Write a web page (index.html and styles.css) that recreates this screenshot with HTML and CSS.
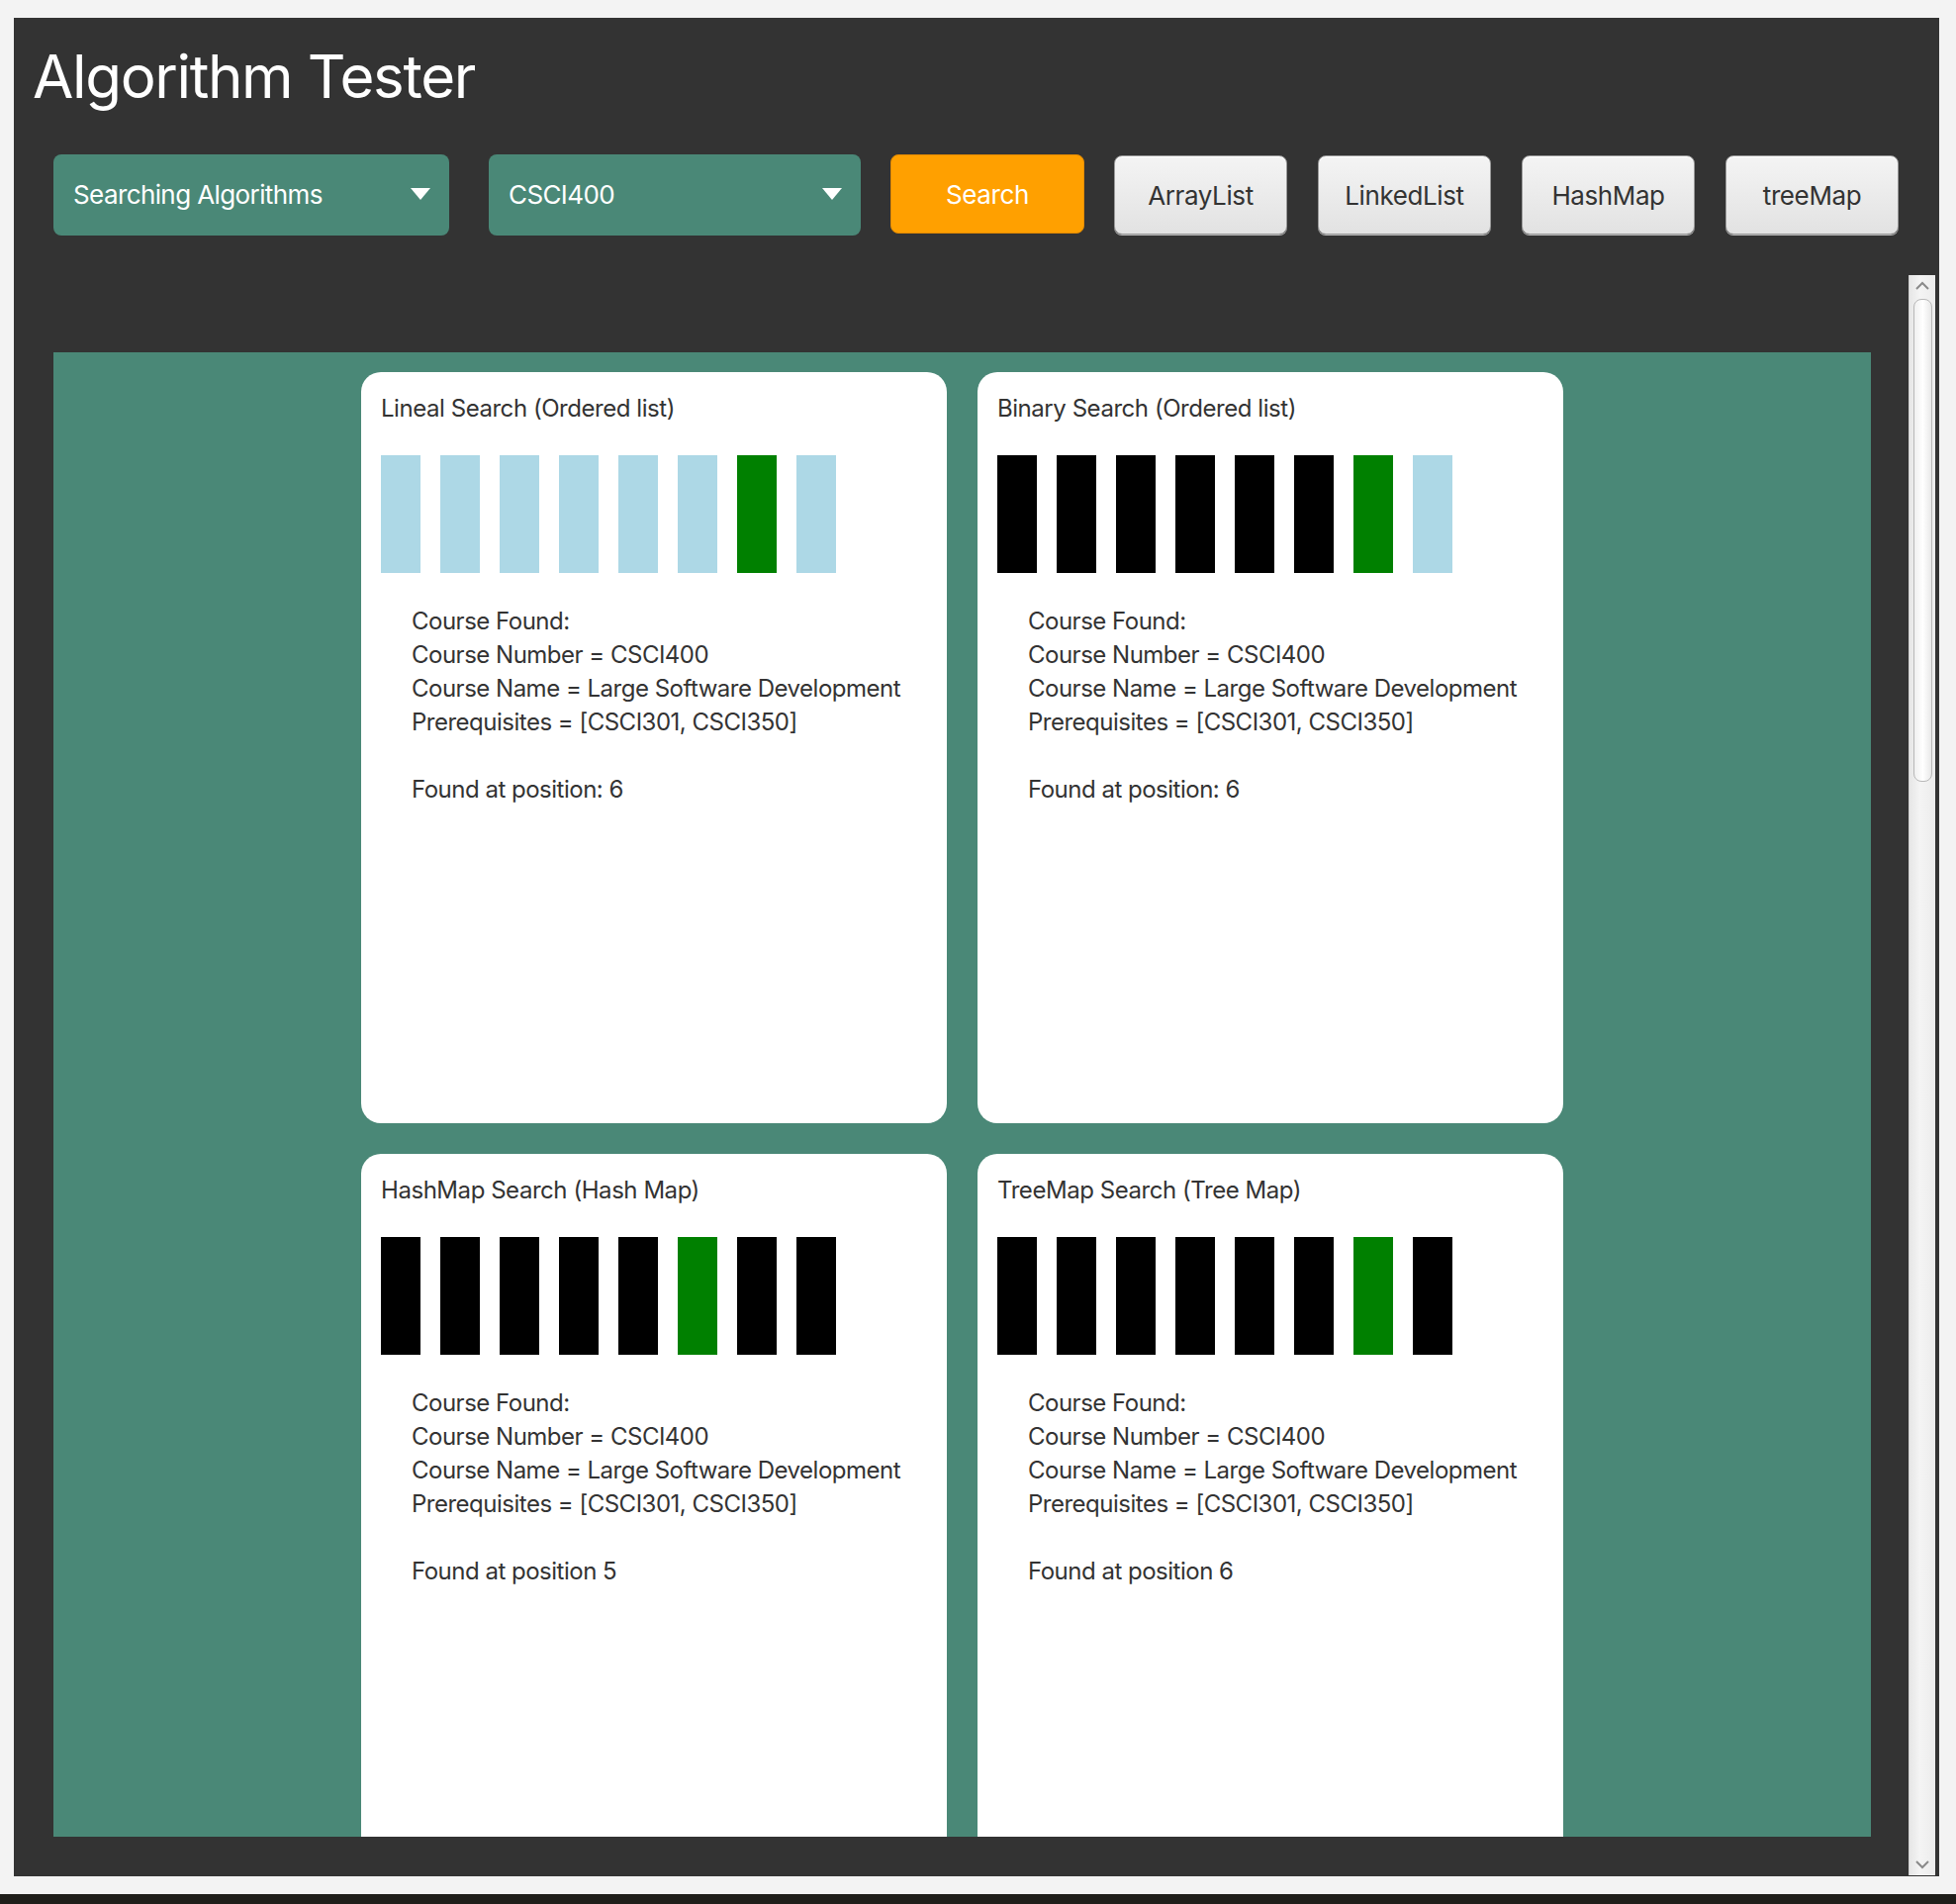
FILE: index.html
```html
<!DOCTYPE html>
<html lang="en">
<head>
<meta charset="utf-8">
<title>Algorithm Tester</title>
<link rel="stylesheet" href="styles.css">
</head>
<body>
<div class="window">
  <header class="app-header">
    <h1 class="app-title">Algorithm Tester</h1>
  </header>
  <div class="toolbar">
    <div class="select select-algo">
      <span class="select-label">Searching Algorithms</span>
      <svg class="select-arrow" viewBox="0 0 20 12" width="20" height="12"><path d="M0 0H20L10 12Z" fill="#fff"/></svg>
    </div>
    <div class="select select-course">
      <span class="select-label">CSCI400</span>
      <svg class="select-arrow" viewBox="0 0 20 12" width="20" height="12"><path d="M0 0H20L10 12Z" fill="#fff"/></svg>
    </div>
    <button class="btn btn-search">Search</button>
    <button class="btn btn-plain">ArrayList</button>
    <button class="btn btn-plain">LinkedList</button>
    <button class="btn btn-plain">HashMap</button>
    <button class="btn btn-plain">treeMap</button>
  </div>
  <div class="scroll-area">
    <div class="viewport">
      <div class="panel">
        <section class="card">
          <h2 class="card-title">Lineal Search (Ordered list)</h2>
          <div class="bars">
            <span class="bar bar-blue"></span><span class="bar bar-blue"></span><span class="bar bar-blue"></span><span class="bar bar-blue"></span><span class="bar bar-blue"></span><span class="bar bar-blue"></span><span class="bar bar-green"></span><span class="bar bar-blue"></span>
          </div>
          <div class="result">
            <p>Course Found:</p>
            <p>Course Number = CSCI400</p>
            <p>Course Name = Large Software Development</p>
            <p>Prerequisites = [CSCI301, CSCI350]</p>
            <p class="blank">&nbsp;</p>
            <p>Found at position: 6</p>
          </div>
        </section>
        <section class="card">
          <h2 class="card-title">Binary Search (Ordered list)</h2>
          <div class="bars">
            <span class="bar bar-black"></span><span class="bar bar-black"></span><span class="bar bar-black"></span><span class="bar bar-black"></span><span class="bar bar-black"></span><span class="bar bar-black"></span><span class="bar bar-green"></span><span class="bar bar-blue"></span>
          </div>
          <div class="result">
            <p>Course Found:</p>
            <p>Course Number = CSCI400</p>
            <p>Course Name = Large Software Development</p>
            <p>Prerequisites = [CSCI301, CSCI350]</p>
            <p class="blank">&nbsp;</p>
            <p>Found at position: 6</p>
          </div>
        </section>
        <section class="card">
          <h2 class="card-title">HashMap Search (Hash Map)</h2>
          <div class="bars">
            <span class="bar bar-black"></span><span class="bar bar-black"></span><span class="bar bar-black"></span><span class="bar bar-black"></span><span class="bar bar-black"></span><span class="bar bar-green"></span><span class="bar bar-black"></span><span class="bar bar-black"></span>
          </div>
          <div class="result">
            <p>Course Found:</p>
            <p>Course Number = CSCI400</p>
            <p>Course Name = Large Software Development</p>
            <p>Prerequisites = [CSCI301, CSCI350]</p>
            <p class="blank">&nbsp;</p>
            <p>Found at position 5</p>
          </div>
        </section>
        <section class="card">
          <h2 class="card-title">TreeMap Search (Tree Map)</h2>
          <div class="bars">
            <span class="bar bar-black"></span><span class="bar bar-black"></span><span class="bar bar-black"></span><span class="bar bar-black"></span><span class="bar bar-black"></span><span class="bar bar-black"></span><span class="bar bar-green"></span><span class="bar bar-black"></span>
          </div>
          <div class="result">
            <p>Course Found:</p>
            <p>Course Number = CSCI400</p>
            <p>Course Name = Large Software Development</p>
            <p>Prerequisites = [CSCI301, CSCI350]</p>
            <p class="blank">&nbsp;</p>
            <p>Found at position 6</p>
          </div>
        </section>
      </div>
    </div>
    <div class="scrollbar">
      <svg class="sb-arrow" viewBox="0 0 16 10" width="16" height="10"><path d="M2 8L8 2L14 8" fill="none" stroke="#8a8a8a" stroke-width="2"/></svg>
      <div class="sb-track">
        <div class="sb-thumb"></div>
      </div>
      <svg class="sb-arrow" viewBox="0 0 16 10" width="16" height="10"><path d="M2 2L8 8L14 2" fill="none" stroke="#8a8a8a" stroke-width="2"/></svg>
    </div>
  </div>
</div>
<div class="desk-strip"></div>
</body>
</html>
```

FILE: styles.css
```css
html, body {
  margin: 0;
  padding: 0;
}
body {
  background: #f3f3f3;
  width: 1977px;
  height: 1924px;
  overflow: hidden;
  font-family: Inter, "Liberation Sans", sans-serif;
}
.window {
  margin: 18px 0 0 14px;
  width: 1946px;
  height: 1878px;
  background: #333333;
  display: flex;
  flex-direction: column;
}
.app-header {
  padding: 29px 0 0 19px;
}
.app-title {
  margin: 0;
  font-weight: 400;
  font-size: 60px;
  line-height: 60px;
  letter-spacing: -1.35px;
  color: #ffffff;
}
.toolbar {
  margin-top: 49px;
  padding-left: 40px;
  display: flex;
  align-items: flex-start;
}
.select {
  height: 82px;
  box-sizing: border-box;
  background: #4a8877;
  border-radius: 8px;
  display: flex;
  align-items: center;
  justify-content: space-between;
  padding: 0 19px 2px 20px;
  color: #ffffff;
  font-size: 26px;
  letter-spacing: -0.6px;
}
.select-algo {
  width: 400px;
  margin-right: 40px;
}
.select-course {
  width: 376px;
  margin-right: 30px;
}
.select-arrow {
  display: block;
}
.btn {
  font-family: inherit;
  font-size: 26px;
  letter-spacing: -0.4px;
  height: 80px;
  border-radius: 8px;
  cursor: pointer;
  margin-right: 30px;
  padding: 0;
}
.btn-search {
  width: 196px;
  height: 80px;
  background: #ffa000;
  border: 1px solid #e28a00;
  color: #ffffff;
}
.btn-plain {
  width: 175px;
  margin-top: 1px;
  margin-right: 31px;
  color: #333333;
  background: linear-gradient(#f4f4f4, #e2e2e2);
  border: 1px solid #9a9a9a;
  box-shadow: inset 0 1px 0 #ffffff, 0 1px 0 #b8b8b8;
}
.scroll-area {
  margin-top: 40px;
  height: 1617px;
  display: flex;
}
.viewport {
  flex: 1;
  padding: 78px 38px 0 40px;
}
.panel {
  height: 1500px;
  overflow: hidden;
  background: #4a8877;
  display: grid;
  grid-template-columns: repeat(2, 592px);
  grid-auto-rows: 759px;
  justify-content: center;
  align-content: start;
  column-gap: 31px;
  row-gap: 31px;
  padding-top: 20px;
  box-sizing: border-box;
}
.card {
  background: #ffffff;
  border-radius: 20px;
  padding: 22px 20px 20px;
  box-sizing: border-box;
  color: #333333;
}
.card-title {
  margin: 0;
  font-weight: 400;
  font-size: 24px;
  line-height: 29px;
  letter-spacing: -0.45px;
}
.bars {
  margin-top: 33px;
  display: flex;
  gap: 20px;
}
.bar {
  width: 40px;
  height: 119px;
  display: block;
}
.bar-blue { background: #add8e6; }
.bar-black { background: #000000; }
.bar-green { background: #008000; }
.result {
  margin-top: 32px;
  padding-left: 31px;
  font-size: 24px;
  line-height: 34px;
  letter-spacing: -0.5px;
}
.result p {
  margin: 0;
}
.scrollbar {
  width: 27px;
  margin-right: 4px;
  height: 1617px;
  box-sizing: border-box;
  background: linear-gradient(90deg, #e6e6e6, #f4f4f4 40%, #ececec);
  border-left: 1px solid #d0d0d0;
  display: flex;
  flex-direction: column;
  align-items: center;
}
.sb-arrow {
  display: block;
  margin: 6px 0;
  flex: none;
}
.sb-track {
  flex: 1;
  width: 100%;
  padding: 2px 3px 0 4px;
  box-sizing: border-box;
}
.sb-thumb {
  height: 488px;
  border-radius: 8px;
  border: 1px solid #b8b8b8;
  background: linear-gradient(90deg, #f0f0f0, #ffffff 50%, #e8e8e8);
  box-sizing: border-box;
}
.desk-strip {
  margin-top: 18px;
  height: 10px;
  background: #1f1e1a;
}
```
